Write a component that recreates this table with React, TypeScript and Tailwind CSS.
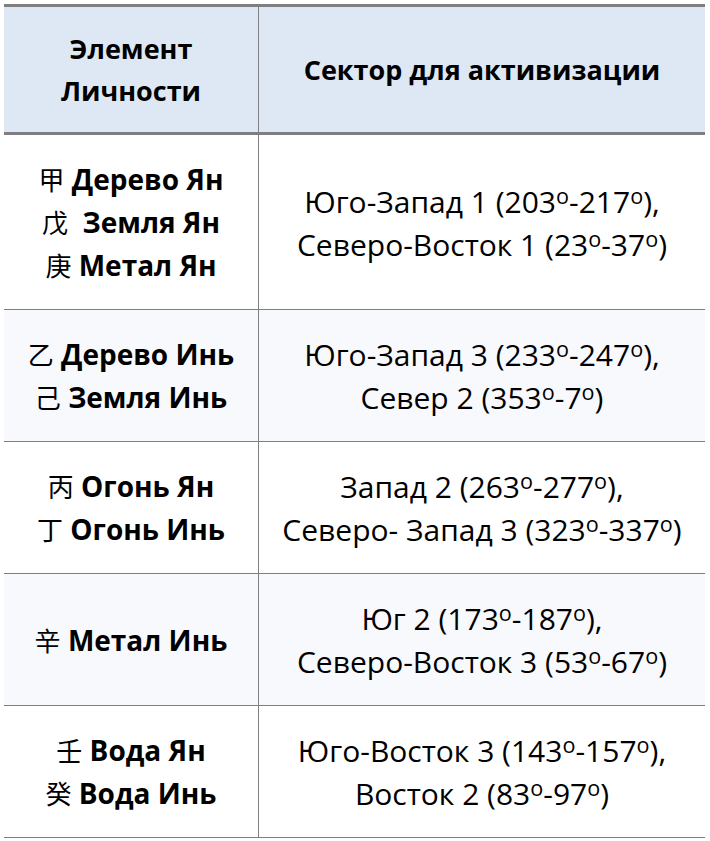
const rows = [
  {
    left: [
      ["甲", "Дерево Ян"],
      ["戊", " Земля Ян"],
      ["庚", "Метал Ян"],
    ],
    right: ["Юго-Запад 1 (203º-217º),", "Северо-Восток 1 (23º-37º)"],
  },
  {
    left: [
      ["乙", "Дерево Инь"],
      ["己", "Земля Инь"],
    ],
    right: ["Юго-Запад 3 (233º-247º),", "Север 2 (353º-7º)"],
  },
  {
    left: [
      ["丙", "Огонь Ян"],
      ["丁", "Огонь Инь"],
    ],
    right: ["Запад 2 (263º-277º),", "Северо- Запад 3 (323º-337º)"],
  },
  {
    left: [["辛", "Метал Инь"]],
    right: ["Юг 2 (173º-187º),", "Северо-Восток 3 (53º-67º)"],
  },
  {
    left: [
      ["壬", "Вода Ян"],
      ["癸", "Вода Инь"],
    ],
    right: ["Юго-Восток 3 (143º-157º),", "Восток 2 (83º-97º)"],
  },
];

// degree marks in the source are a raised small "o"
function Degrees({ text }: { text: string }) {
  const parts = text.split("º");
  return (
    <>
      {parts.map((p, i) => (
        <span key={i}>
          {p}
          {i < parts.length - 1 && (
            <span className="align-[0.42em] text-[0.72em] leading-[0]">o</span>
          )}
        </span>
      ))}
    </>
  );
}

export default function App() {
  return (
    <div
      className="min-h-[841px] bg-white pt-1 pl-1 text-black"
      style={{ fontFamily: '"Open Sans", "Noto Sans CJK SC", sans-serif' }}
    >
      <div className="w-[701px] border-t-[3px] border-[#7f7f7f]">
        {/* header */}
        <div className="flex border-b-[3px] border-[#7f7f7f] bg-[#dde8f4] text-[27px] font-bold leading-[42px]">
          <div className="flex w-[255px] items-center justify-center border-r border-[#7f7f7f] pt-[21px] pb-[20px] text-center">
            Элемент
            <br />
            Личности
          </div>
          <div className="flex flex-1 items-center justify-center text-center">
            Сектор для активизации
          </div>
        </div>

        {rows.map((row, i) => (
          <div
            key={i}
            className={`flex border-b border-[#7f7f7f] ${
              i % 2 === 1 ? "bg-[#f8f9fc]" : "bg-white"
            }`}
          >
            <div className="flex w-[255px] flex-col items-center justify-center border-r border-[#7f7f7f] pt-[23px] pb-[22px] text-center text-[28px]">
              {row.left.map(([ch, label]) => (
                <div key={ch} className="h-[43px] whitespace-pre leading-[43px]">
                  <span className="text-[26px] font-normal leading-[0]">{ch}</span>{" "}
                  <span className="font-bold">{label}</span>
                </div>
              ))}
            </div>
            <div className="flex flex-1 flex-col items-center justify-center pt-[23px] pb-[22px] text-center text-[30px]">
              {row.right.map((line) => (
                <div key={line} className="h-[43px] leading-[43px]">
                  <Degrees text={line} />
                </div>
              ))}
            </div>
          </div>
        ))}
      </div>
    </div>
  );
}
